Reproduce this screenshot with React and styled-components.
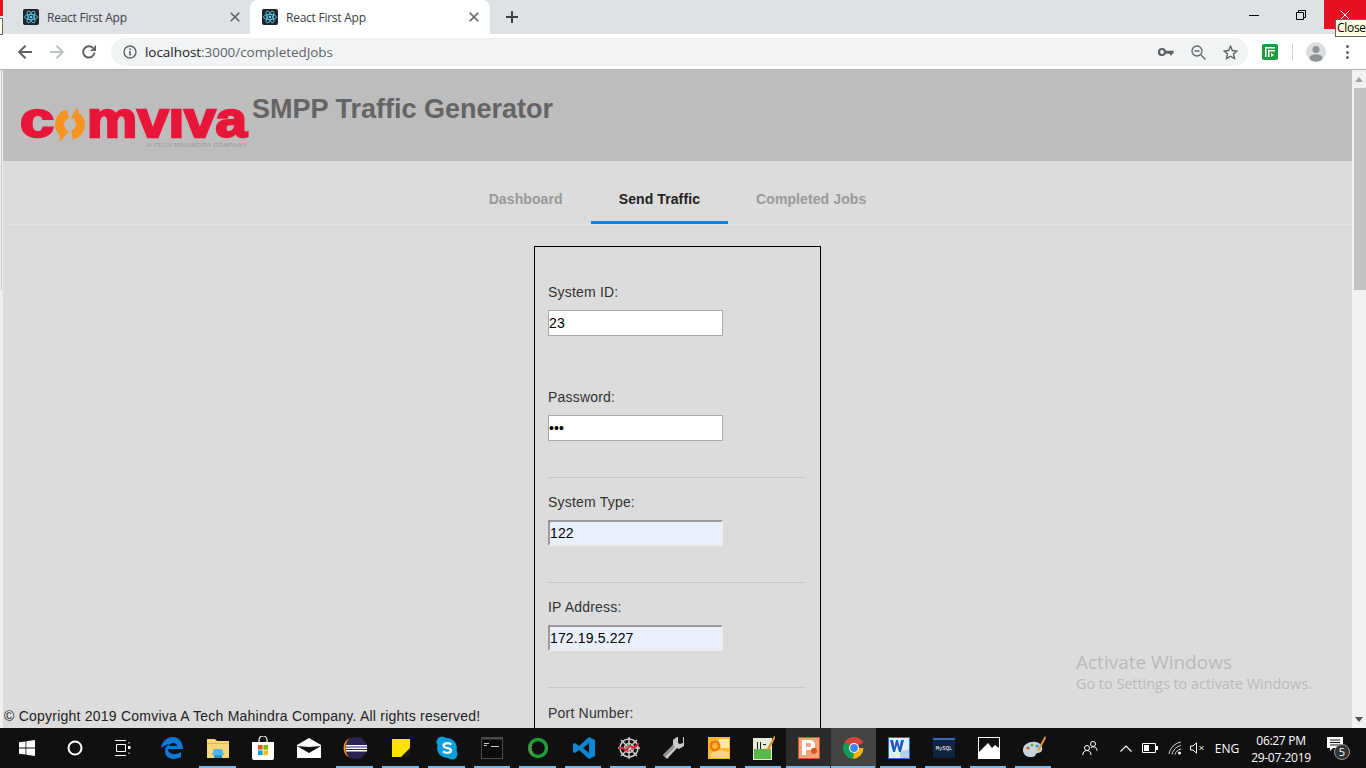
import React from 'react'
import styled, { createGlobalStyle } from 'styled-components'

const GlobalStyle = createGlobalStyle`
  html, body {
    margin: 0;
    padding: 0;
    height: 100%;
    overflow: hidden;
    background: #dcdcdc;
  }
  * { box-sizing: border-box; }
`

const Screen = styled.div`
  position: relative;
  width: 1366px;
  height: 768px;
  overflow: hidden;
  display: flex;
  flex-direction: column;
  font-family: "Liberation Sans", Arial, sans-serif;
`

/* browser chrome */
const TabStrip = styled.div`
  flex: 0 0 34px;
  background: #dee1e6;
  display: flex;
  align-items: flex-end;
  padding-left: 10px;
`

const Tab = styled.div`
  width: 240px;
  height: 34px;
  display: flex;
  align-items: center;
  padding: ${p => (p.$active ? '0 11px 0 12px' : '0 10px 0 13px')};
  gap: 8px;
  border-radius: 8px 8px 0 0;
  background: ${p => (p.$active ? '#fff' : 'transparent')};
  font-family: "Open Sans", sans-serif;
  font-size: 12px;
  color: #3c4043;
`

const TabTitle = styled.span`
  flex: 1;
  letter-spacing: -0.25px;
`

const Favicon = styled.span`
  width: 16px;
  height: 16px;
  border-radius: 2px;
  background: #20232a;
  display: flex;
`

const NewTab = styled.span`
  width: 28px;
  height: 28px;
  margin-left: 8px;
  margin-bottom: 3px;
  display: flex;
  align-items: center;
  justify-content: center;
`

const WindowButtons = styled.div`
  margin-left: auto;
  align-self: flex-start;
  display: flex;
  height: 29px;
`

const WindowButton = styled.span`
  width: ${p => p.$w}px;
  display: flex;
  align-items: center;
  justify-content: center;
  background: ${p => (p.$close ? '#e81123' : 'transparent')};
`

const Toolbar = styled.div`
  flex: 0 0 36px;
  background: #fff;
  display: flex;
  align-items: center;
  padding-left: 9px;
  padding-top: 1px;
  border-bottom: 1px solid #b4b4b4;
`

const NavButton = styled.span`
  width: 32px;
  height: 28px;
  display: flex;
  align-items: center;
  justify-content: center;
`

const AddressBar = styled.div`
  width: 1137px;
  height: 28px;
  margin-left: 6px;
  padding: 0 2px 0 12px;
  border-radius: 14px;
  background: #f1f3f4;
  display: flex;
  align-items: center;
  font-family: "Open Sans", sans-serif;
  font-size: 13.5px;
  letter-spacing: -0.05px;
`

const UrlHost = styled.span`
  margin-left: 8px;
  color: #202124;
`

const UrlPath = styled.span`
  color: #5f6368;
  flex: 1;
`

const AddressIcon = styled.span`
  width: 32px;
  display: flex;
  justify-content: center;
`

const ToolbarDivider = styled.span`
  width: 1px;
  height: 16px;
  background: #d0d1d2;
  margin: 0 13px 0 14px;
`

const ExtensionIcon = styled.span`
  width: 16px;
  height: 16px;
  margin-left: 14px;
  border-radius: 2px;
  background: #1f9a3e;
  display: flex;
`

const Avatar = styled.span`
  width: 20px;
  height: 20px;
  border-radius: 50%;
  background: #dadce0;
  overflow: hidden;
  display: flex;
`

const MenuDots = styled.span`
  display: flex;
  flex-direction: column;
  gap: 2.4px;
  margin-left: 20px;
  & i {
    width: 3px;
    height: 3px;
    border-radius: 50%;
    background: #5f6368;
  }
`

/* page */
const Viewport = styled.div`
  flex: 1;
  min-height: 0;
  display: flex;
  background: #dcdcdc;
`

const LeftEdge = styled.div`
  flex: 0 0 3px;
  background: #f0f0f0;
  padding-left: 1px;
`

const LeftEdgeThumb = styled.span`
  display: block;
  width: 1px;
  height: 220px;
  background: #c8c8c8;
`

const Page = styled.div`
  flex: 1;
  min-width: 0;
  overflow: hidden;
`

const Header = styled.header`
  height: 91px;
  background: #bdbdbd;
  display: flex;
  align-items: flex-start;
  padding-left: 17px;
`

const Logo = styled.svg`
  width: 232px;
  height: 70px;
  margin-top: 17px;
  flex-shrink: 0;
`

const Title = styled.h1`
  margin: 22px 0 0;
  font-size: 27px;
  line-height: 34px;
  font-weight: 700;
  color: #646464;
`

const TabBar = styled.nav`
  height: 64px;
  padding-top: 14px;
  border-bottom: 1px solid #e2e2e2;
  display: flex;
  justify-content: center;
`

const NavTab = styled.div`
  height: 49px;
  padding: 1px 28px 0;
  display: flex;
  align-items: center;
  font-size: 14px;
  font-weight: 700;
  letter-spacing: 0.1px;
  color: ${p => (p.$active ? '#222' : '#999')};
  border-bottom: 3px solid ${p => (p.$active ? '#0a84d8' : 'transparent')};
`

const CardWrap = styled.div`
  display: flex;
  justify-content: center;
  padding-top: 21px;
`

const Card = styled.form`
  width: 287px;
  height: 700px;
  border: 1px solid #000;
  padding: 0 14px 0 13px;
`

const Field = styled.div`
  height: 105px;
  padding-top: ${p => (p.$first ? '36px' : '15px')};
  border-top: 1px solid ${p => (p.$rule ? '#c8c8c8' : 'transparent')};
  &:first-child {
    height: 125px;
    border-top: 0;
  }
  &:last-child {
    padding-top: 16px;
  }
`

const Label = styled.label`
  display: block;
  font-size: 14px;
  line-height: 18px;
  letter-spacing: 0.2px;
  color: #333;
  margin-bottom: 9px;
`

const Input = styled.input`
  display: block;
  width: 175px;
  height: 26px;
  padding: 1px 0;
  font-family: "Liberation Sans", Arial, sans-serif;
  font-size: 14px;
  letter-spacing: 0.15px;
  color: #000;
  background: ${p => (p.$autofill ? '#e8f0fe' : '#fff')};
  border-style: solid;
  border-width: ${p => (p.$autofill ? '2px' : '1px')};
  border-color: ${p => (p.$autofill ? '#9a9a9a #eeeeee #eeeeee #9a9a9a' : '#a9a9a9')};
  border-radius: 0;
  outline: none;
`

const Scrollbar = styled.div`
  flex: 0 0 14px;
  background: #f1f1f1;
  display: flex;
  flex-direction: column;
  align-items: flex-end;
`

const ScrollButton = styled.span`
  width: 14px;
  height: 18px;
  display: flex;
  align-items: center;
  justify-content: center;
`

const ScrollThumb = styled.span`
  width: 12px;
  height: 202px;
  background: #c1c1c1;
`

const ScrollTrack = styled.span`
  flex: 1;
`

/* things lying over the page */
const Copyright = styled.div`
  position: absolute;
  left: 4px;
  bottom: 44px;
  font-size: 14px;
  line-height: 16px;
  letter-spacing: 0.23px;
  color: #222;
`

const Watermark = styled.div`
  position: absolute;
  left: 1076px;
  top: 650px;
  font-family: "Open Sans", sans-serif;
  color: #b9b9b9;
`

const WatermarkTitle = styled.div`
  font-size: 19px;
  line-height: 24px;
`

const WatermarkText = styled.div`
  font-size: 14.4px;
  line-height: 20px;
`

const Tooltip = styled.div`
  position: absolute;
  left: 1335px;
  top: 19px;
  width: 31px;
  height: 18px;
  padding-left: 1px;
  background: #ffffe1;
  border: 1px solid #646464;
  border-right: 0;
  font-family: "Open Sans", sans-serif;
  font-size: 12px;
  line-height: 15px;
  letter-spacing: -0.3px;
  white-space: nowrap;
  color: #000;
`

const CornerMark = styled.div`
  position: absolute;
  left: 0;
  top: 0;
  width: 3px;
  height: 16px;
  background: #e81123;
`

const CornerTip = styled.div`
  position: absolute;
  left: 0;
  top: 18px;
  width: 3px;
  height: 17px;
  background: #ffffe1;
  border: 1px solid #646464;
  border-left: 0;
`

/* taskbar */
const Taskbar = styled.div`
  flex: 0 0 40px;
  background: #101010;
  display: flex;
  color: #fff;
  font-family: "Open Sans", sans-serif;
`

const ShellSlot = styled.span`
  flex: 0 0 ${p => p.$w}px;
  display: flex;
  align-items: center;
  justify-content: center;
`

const AppSlot = styled.span`
  position: relative;
  flex: 0 0 ${p => (p.$wide ? '45.8px' : '45px')};
  height: 40px;
  display: flex;
  align-items: center;
  justify-content: center;
  background: ${p => (p.$state === 'active' ? '#444' : p.$state === 'open' ? '#2b2b2b' : 'transparent')};
  &::after {
    content: '';
    display: ${p => (p.$running ? 'block' : 'none')};
    position: absolute;
    left: ${p => (p.$state ? '0' : '4px')};
    right: ${p => (p.$state ? '1px' : '5px')};
    bottom: 0;
    height: 2px;
    background: #76b9ed;
  }
`

const Tray = styled.div`
  margin-left: auto;
  display: flex;
  align-items: center;
  padding-right: 5px;
  font-size: 12px;
`

const TraySlot = styled.span`
  width: ${p => p.$w}px;
  margin-left: ${p => p.$gap || 0}px;
  display: flex;
  align-items: center;
  justify-content: center;
`

const Clock = styled.span`
  width: 68px;
  text-align: center;
  font-size: 12px;
  line-height: 17px;
  letter-spacing: -0.3px;
  padding-top: 1px;
`

const BackArrow = ({ color = '#5f6368', flip }) => (
  <svg width="16" height="16" viewBox="0 0 16 16" style={flip ? { transform: 'scaleX(-1)' } : undefined}>
    <path d="M15 8H2.5M8.5 1.8 2.2 8l6.3 6.2" fill="none" stroke={color} strokeWidth="2" />
  </svg>
)

const ReactMark = () => (
  <svg width="16" height="16" viewBox="0 0 16 16" fill="none" stroke="#61dafb" strokeWidth="0.8">
    <circle cx="8" cy="8" r="1.3" fill="#61dafb" stroke="none" />
    <ellipse cx="8" cy="8" rx="6.5" ry="2.6" />
    <ellipse cx="8" cy="8" rx="6.5" ry="2.6" transform="rotate(60 8 8)" />
    <ellipse cx="8" cy="8" rx="6.5" ry="2.6" transform="rotate(120 8 8)" />
  </svg>
)

const CloseGlyph = ({ color = '#5f6368', size = 10, width = 1.6 }) => (
  <svg width={size} height={size} viewBox="0 0 10 10">
    <path d="M.7.7l8.6 8.6M9.3.7.7 9.3" stroke={color} strokeWidth={width} fill="none" />
  </svg>
)

const ComvivaLogo = () => (
  <Logo viewBox="0 0 232 70">
    <text x="0" y="50" fontFamily="'Liberation Sans', sans-serif" fontWeight="700" fontSize="50" fill="#e8173a" stroke="#e8173a" strokeWidth="2.4" textLength="34" lengthAdjust="spacingAndGlyphs">c</text>
    <g fill="none" stroke="#f7941d" strokeWidth="9">
      <path d="M57 30A10.500 10.500 0 0 1 52 48" />
      <path d="M43 45A10.500 10.500 0 0 1 48 27" />
    </g>
    <path d="M57 20l-6 11 10 2zM40 55l9-11-10-2z" fill="#f7941d" />
    <text x="67" y="50" fontFamily="'Liberation Sans', sans-serif" fontWeight="700" fontSize="50" fill="#e8173a" stroke="#e8173a" strokeWidth="2.4" textLength="160" lengthAdjust="spacingAndGlyphs">mvıva</text>
    <text x="127" y="60" fontFamily="'Liberation Sans', sans-serif" fontWeight="700" fontSize="6" fill="#a5a5a5" textLength="100" lengthAdjust="spacingAndGlyphs">A TECH MAHINDRA COMPANY</text>
  </Logo>
)

const ICONS = {
  edge: (
    <svg width="24" height="24" viewBox="0 0 24 24">
      <path d="M1 12C2 5 7 1 13 1c6 0 10 5 10 12H8c.4 5 7 7 13 3v5c-7 4-16 2-16-6 0-3 2-6 5-7-3 0-6 2-9 4zM9 10h8c0-4-7-4-8 0z" fill="#0f78d4" />
    </svg>
  ),
  folder: (
    <svg width="22" height="20" viewBox="0 0 22 20">
      <path d="M0 1h8l2 2h12v17H0z" fill="#f8d575" />
      <path d="M0 5h22v1H0z" fill="#e9b949" />
      <path d="M5 17l2-6h8l2 6z" fill="#4db4e8" />
      <path d="M7 17h8v3H7z" fill="#2a8fcb" />
    </svg>
  ),
  store: (
    <svg width="22" height="24" viewBox="0 0 22 24">
      <path d="M7 6V4a4 4 0 0 1 8 0v2" fill="none" stroke="#fff" strokeWidth="1.2" />
      <path d="M0 6h22v16a2 2 0 0 1-2 2H2a2 2 0 0 1-2-2z" fill="#fff" />
      <path d="M6 9h4.6v4.6H6z" fill="#f25022" />
      <path d="M11.4 9H16v4.6h-4.6z" fill="#7fba00" />
      <path d="M6 14.4h4.6V19H6z" fill="#00a4ef" />
      <path d="M11.4 14.4H16V19h-4.6z" fill="#ffb900" />
    </svg>
  ),
  mail: (
    <svg width="24" height="20" viewBox="0 0 24 20">
      <path d="M12 0l12 7v13H0V7z" fill="#fff" />
      <path d="M0 8l12 7 12-7-12 1z" fill="#101010" />
    </svg>
  ),
  eclipse: (
    <svg width="24" height="24" viewBox="0 0 24 24">
      <circle cx="13" cy="12" r="11" fill="#2c2255" />
      <path d="M7 2A11 11 0 0 0 7 22 13 13 0 0 1 7 2z" fill="#f7941e" />
      <path d="M3 9h21v1.4H3zM2.600 11.500h21.400v1.400H2.600zM3 14h21v1.400H3z" fill="#fff" />
    </svg>
  ),
  sticky: (
    <svg width="18" height="18" viewBox="0 0 18 18">
      <path d="M0 0h18v18H0z" fill="#ffe100" />
      <path d="M9 18l9-9v9z" fill="#1a1a1a" />
    </svg>
  ),
  skype: (
    <svg width="22" height="24" viewBox="0 0 22 24">
      <circle cx="11" cy="12" r="10" fill="#0a9edc" />
      <circle cx="6" cy="6" r="5.500" fill="#0a9edc" />
      <circle cx="16" cy="18" r="5.500" fill="#0a9edc" />
      <path d="M15.500 8.500C13 6.500 7.500 7 7.500 9.500c0 3.500 7.500 1.500 7.500 5 0 2.800-5.500 3-8 .8" fill="none" stroke="#fff" strokeWidth="2.200" />
    </svg>
  ),
  terminal: (
    <svg width="22" height="22" viewBox="0 0 22 22">
      <path d="M0 0h22v22H0z" fill="#4a4a4a" />
      <path d="M1 2.500h20V21H1z" fill="#0c0c0c" />
      <path d="M3 6h5v1H3zM3 8h3v1H3zM10 9h8v1h-8z" fill="#ccc" />
    </svg>
  ),
  ring: (
    <svg width="22" height="24" viewBox="0 0 22 24">
      <circle cx="11" cy="12" r="8.500" fill="none" stroke="#1f9d3a" strokeWidth="3.400" />
      <path d="M4 9a8 8 0 0 0 2 9" fill="none" stroke="#6a8f52" strokeWidth="3" strokeDasharray="2 1" />
    </svg>
  ),
  vscode: (
    <svg width="24" height="24" viewBox="0 0 24 24">
      <path d="M17 1l6 3v16l-6 3L7 14l-4 3-2-1V8l2-1 4 3zM17 7l-6 5 6 5z" fill="#0f87d2" />
    </svg>
  ),
  spider: (
    <svg width="24" height="24" viewBox="0 0 24 24" fill="none">
      <g stroke="#cfcfcf" strokeWidth="1.500">
        <circle cx="12" cy="12" r="9" />
        <circle cx="12" cy="12" r="4.500" />
        <path d="M12 1v22M1 12h22M4 4l16 16M20 4L4 20" />
      </g>
      <path d="M2 13c3-3 4-1 6 1s3-4 5-4 3 3 4 2 3-4 5-4" stroke="#d9262e" strokeWidth="2" />
    </svg>
  ),
  wrench: (
    <svg width="24" height="24" viewBox="0 0 24 24">
      <path d="M22 1v9l-5 3-2-1L5 23l-4-4 10-10V4l4-3h1v6l2 1 3-1V1z" fill="#c9c9c9" />
      <path d="M1 19l10-10 2 2L3 21z" fill="#8f8f8f" />
    </svg>
  ),
  outlook: (
    <svg width="22" height="22" viewBox="0 0 22 22">
      <path d="M0 0h22v22H0z" fill="#f7b731" />
      <path d="M11 2h10v9H11z" fill="#fde9a6" />
      <circle cx="7" cy="9" r="4.200" fill="none" stroke="#e87d0d" strokeWidth="2.600" />
      <path d="M3 16l8-3 10 2v6H3z" fill="#fbd77a" />
    </svg>
  ),
  notepad: (
    <svg width="22" height="24" viewBox="0 0 22 24">
      <path d="M0 2h19v22H0z" fill="#e8ead5" />
      <path d="M1 13h17v10H1z" fill="#58b947" />
      <path d="M4 6h1v7H4zM7 6h1v7H7zM10 8h3v1h-3z" fill="#222" />
      <path d="M21 0l-7 13-1 2 3-1 7-13z" fill="#d7902c" />
    </svg>
  ),
  ppt: (
    <svg width="22" height="22" viewBox="0 0 22 22">
      <path d="M0 0h22v22H0z" fill="#d9541e" />
      <path d="M1 1h20v20H1z" fill="#f7a27c" />
      <path d="M4 3h8a4.500 4.500 0 0 1 0 10H8v5H4zM8 6v4h3a2 2 0 0 0 0-4z" fill="#fff" />
      <circle cx="16" cy="14" r="3" fill="#d9541e" />
    </svg>
  ),
  chrome: (
    <svg width="22" height="22" viewBox="0 0 22 22">
      <path d="M11 11L1.500 5.500A11 11 0 0 1 20.500 5.500z" fill="#db4437" />
      <path d="M11 11h9.500A11 11 0 0 1 10 22z" fill="#f4b400" />
      <path d="M11 11l-1 11A11 11 0 0 1 1.500 5.500z" fill="#0f9d58" />
      <circle cx="11" cy="11" r="5" fill="#fff" />
      <circle cx="11" cy="11" r="3.900" fill="#4285f4" />
    </svg>
  ),
  word: (
    <svg width="22" height="22" viewBox="0 0 22 22">
      <path d="M0 0h22v22H0z" fill="#2b6fc8" />
      <path d="M1 1h20v20H1z" fill="#e7eefa" />
      <path d="M2 3l3 12h2l2-7 2 7h2l3-12h-3l-1.500 7L10 3H8l-1.500 7L5 3z" fill="#1d5fb8" />
      <path d="M12 15l9-3v9h-9z" fill="#b8cdea" />
    </svg>
  ),
  mysql: (
    <svg width="22" height="20" viewBox="0 0 22 20">
      <path d="M0 0h22v20H0z" fill="#10233f" />
      <path d="M0 0h22v2H0z" fill="#2f6fb5" />
      <text x="11" y="12" fontSize="5.500" fontFamily="'Liberation Mono', monospace" textAnchor="middle" fill="#fff">MySQL</text>
    </svg>
  ),
  photos: (
    <svg width="22" height="22" viewBox="0 0 22 22">
      <path d="M0 0h22v22H0z" fill="#fff" />
      <path d="M1 1h20v10l-4-3-3 3-4-5-9 9z" fill="#101010" />
    </svg>
  ),
  paint: (
    <svg width="24" height="24" viewBox="0 0 24 24">
      <path d="M1 14c0-6 7-9 13-8 5 1 7 5 6 8-1 4-5 2-6 4-1 3-3 3-6 3-4 0-7-3-7-7z" fill="#c7d4dc" />
      <circle cx="6" cy="12" r="1.500" fill="#e04f3c" />
      <circle cx="10" cy="9" r="1.500" fill="#58b947" />
      <circle cx="15" cy="10" r="1.500" fill="#3b8fd8" />
      <path d="M23 0l-8 14 2 1 7-13z" fill="#e09a35" />
    </svg>
  ),
}

const APPS = [
  { id: 'edge', wide: true },
  { id: 'folder', wide: true, running: true },
  { id: 'store', wide: true },
  { id: 'mail', wide: true },
  { id: 'eclipse', wide: true, running: true },
  { id: 'sticky', wide: true, running: true },
  { id: 'skype', wide: true, running: true },
  { id: 'terminal', wide: true, running: true },
  { id: 'ring', wide: true, running: true },
  { id: 'vscode', running: true },
  { id: 'spider', running: true },
  { id: 'wrench', running: true },
  { id: 'outlook', running: true },
  { id: 'notepad', running: true },
  { id: 'ppt', running: true, state: 'open' },
  { id: 'chrome', running: true, state: 'active' },
  { id: 'word', running: true },
  { id: 'mysql', running: true },
  { id: 'photos', running: true },
  { id: 'paint', running: true },
]

const FIELDS = [
  { label: 'System ID:', value: '23' },
  { label: 'Password:', value: 'abc', type: 'password' },
  { label: 'System Type:', value: '122', autofill: true, rule: true },
  { label: 'IP Address:', value: '172.19.5.227', autofill: true, rule: true },
  { label: 'Port Number:', value: '', rule: true },
]

const App = () => (
  <Screen>
    <GlobalStyle />
    <TabStrip>
      {[false, true].map(active => (
        <Tab key={String(active)} $active={active}>
          <Favicon><ReactMark /></Favicon>
          <TabTitle>React First App</TabTitle>
          <CloseGlyph />
        </Tab>
      ))}
      <NewTab>
        <svg width="14" height="14" viewBox="0 0 14 14">
          <path d="M7 1v12M1 7h12" stroke="#3c4043" strokeWidth="2" />
        </svg>
      </NewTab>
      <WindowButtons>
        <WindowButton $w={46}>
          <svg width="10" height="10" viewBox="0 0 10 10"><path d="M0 5.500h10" stroke="#000" /></svg>
        </WindowButton>
        <WindowButton $w={47}>
          <svg width="10" height="10" viewBox="0 0 10 10" fill="none" stroke="#000">
            <path d="M.5 2.500h7v7h-7zM2.500 2.500v-2h7v7h-2" />
          </svg>
        </WindowButton>
        <WindowButton $w={42} $close>
          <CloseGlyph color="#fff" width={1} />
        </WindowButton>
      </WindowButtons>
    </TabStrip>

    <Toolbar>
      <NavButton><BackArrow /></NavButton>
      <NavButton><BackArrow color="#bdc1c6" flip /></NavButton>
      <NavButton>
        <svg width="16" height="16" viewBox="0 0 16 16" fill="none">
          <path d="M13.500 8.500A5.700 5.700 0 1 1 11.800 3.800" stroke="#5f6368" strokeWidth="2" />
          <path d="M15 1v6H9z" fill="#5f6368" />
        </svg>
      </NavButton>
      <AddressBar>
        <svg width="14" height="14" viewBox="0 0 14 14" fill="none">
          <circle cx="7" cy="7" r="6" stroke="#5f6368" strokeWidth="1.400" />
          <path d="M7 6v4.500M7 3.500v1.400" stroke="#5f6368" strokeWidth="1.600" />
        </svg>
        <UrlHost>localhost</UrlHost>
        <UrlPath>:3000/completedJobs</UrlPath>
        <AddressIcon>
          <svg width="16" height="10" viewBox="0 0 16 10">
            <circle cx="4" cy="5" r="3" fill="none" stroke="#5f6368" strokeWidth="2.200" />
            <path d="M7 3.800h8.500v3H14v1.500h-2V6.800H7z" fill="#5f6368" />
          </svg>
        </AddressIcon>
        <AddressIcon>
          <svg width="15" height="15" viewBox="0 0 15 15" fill="none" stroke="#5f6368" strokeWidth="1.300">
            <circle cx="6" cy="6" r="5" />
            <path d="M3.500 6h5M10 10l4.500 4.500" />
          </svg>
        </AddressIcon>
        <AddressIcon>
          <svg width="15" height="15" viewBox="0 0 15 15" fill="none" stroke="#5f6368" strokeWidth="1.400">
            <path d="M7.500 1.300l1.900 4.200 4.500.5-3.400 3 1 4.500-4-2.300-4 2.300 1-4.500-3.400-3 4.500-.5z" />
          </svg>
        </AddressIcon>
      </AddressBar>
      <ExtensionIcon>
        <svg width="16" height="16" viewBox="0 0 16 16">
          <path d="M3 3h10v1.500H4.500V13H3zM6 6h7v1.500H7.500V13H6z" fill="#fff" />
          <path d="M9 9l3 2-3 2z" fill="#fff" />
        </svg>
      </ExtensionIcon>
      <ToolbarDivider />
      <Avatar>
        <svg width="20" height="20" viewBox="0 0 20 20" fill="#8f9296">
          <circle cx="10" cy="7.500" r="3.500" />
          <ellipse cx="10" cy="16" rx="6.500" ry="3.800" />
        </svg>
      </Avatar>
      <MenuDots><i /><i /><i /></MenuDots>
    </Toolbar>

    <Viewport>
      <LeftEdge><LeftEdgeThumb /></LeftEdge>
      <Page>
        <Header>
          <ComvivaLogo />
          <Title>SMPP Traffic Generator</Title>
        </Header>
        <TabBar>
          <NavTab>Dashboard</NavTab>
          <NavTab $active>Send Traffic</NavTab>
          <NavTab>Completed Jobs</NavTab>
        </TabBar>
        <CardWrap>
          <Card>
            {FIELDS.map((f, i) => (
              <Field key={f.label} $first={i === 0} $rule={f.rule}>
                <Label>{f.label}</Label>
                <Input
                  readOnly
                  type={f.type || 'text'}
                  value={f.value}
                  $autofill={f.autofill}
                />
              </Field>
            ))}
          </Card>
        </CardWrap>
      </Page>
      <Scrollbar>
        <ScrollButton>
          <svg width="8" height="5" viewBox="0 0 8 5"><path d="M4 0l4 5H0z" fill="#a3a3a3" /></svg>
        </ScrollButton>
        <ScrollThumb />
        <ScrollTrack />
        <ScrollButton>
          <svg width="8" height="5" viewBox="0 0 8 5"><path d="M0 0h8L4 5z" fill="#505050" /></svg>
        </ScrollButton>
      </Scrollbar>
    </Viewport>

    <Taskbar>
      <ShellSlot $w={54}>
        <svg width="16" height="16" viewBox="0 0 16 16" fill="#fff">
          <path d="M0 2.300l6.500-.9v6.200H0zM7.300 1.300L16 0v7.600H7.300zM0 8.400h6.500v6.200L0 13.700zM7.300 8.400H16V16l-8.700-1.300z" />
        </svg>
      </ShellSlot>
      <ShellSlot $w={42}>
        <svg width="16" height="16" viewBox="0 0 16 16"><circle cx="8" cy="8" r="6.500" fill="none" stroke="#fff" strokeWidth="2" /></svg>
      </ShellSlot>
      <ShellSlot $w={53}>
        <svg width="16" height="16" viewBox="0 0 16 16" fill="none" stroke="#fff">
          <path d="M0 .5h11M0 15.500h11M1.500 4.500h9v7h-9zM14 2v1.500M14 12.500V14" />
          <path d="M13 6h2.500v3H13z" fill="#fff" stroke="none" />
        </svg>
      </ShellSlot>
      {APPS.map(app => (
        <AppSlot key={app.id} $wide={app.wide} $running={app.running} $state={app.state}>
          {ICONS[app.id]}
        </AppSlot>
      ))}
      <Tray>
        <TraySlot $w={36}>
          <svg width="16" height="16" viewBox="0 0 16 16" fill="none" stroke="#fff">
            <circle cx="5" cy="8" r="2.500" />
            <circle cx="11" cy="4" r="2.500" />
            <path d="M.8 15c0-3 2-4.500 4.200-4.500S9 12 9 15M9 8c.5-1 1-1.200 2-1.200 2.500 0 4 1.500 4 4" />
          </svg>
        </TraySlot>
        <TraySlot $w={24} $gap={6}>
          <svg width="12" height="7" viewBox="0 0 12 7"><path d="M.5 6.500L6 1l5.500 5.500" fill="none" stroke="#fff" strokeWidth="1.200" /></svg>
        </TraySlot>
        <TraySlot $w={24}>
          <svg width="16" height="10" viewBox="0 0 16 10">
            <path d="M.5.500h13v9H.5z" fill="none" stroke="#fff" />
            <path d="M2 2h5v6H2zM14 3h2v4h-2z" fill="#fff" />
          </svg>
        </TraySlot>
        <TraySlot $w={25}>
          <svg width="14" height="14" viewBox="0 0 14 14" fill="none" stroke="#ddd">
            <path d="M1 13C2 7 7 2 13 1M4 13.500C5 9 8.500 5.500 13 4.500M7 13.500C7.500 11 10 8.500 13 8" />
            <circle cx="11.500" cy="12" r="1.500" fill="#fff" stroke="none" />
          </svg>
        </TraySlot>
        <TraySlot $w={20}>
          <svg width="15" height="12" viewBox="0 0 15 12" fill="none" stroke="#fff">
            <path d="M.5 4h2.500L6.500.8v10.400L3 8H.5zM9.500 4l4 4M13.500 4l-4 4" />
          </svg>
        </TraySlot>
        <TraySlot $w={40}>ENG</TraySlot>
        <Clock>06:27 PM<br />29-07-2019</Clock>
        <TraySlot $w={46}>
          <svg width="26" height="26" viewBox="0 0 26 26">
            <path d="M2 2h16v11H8l-3 3v-3H2z" fill="#fff" />
            <path d="M5 5h10M5 7.500h10M5 10h10" stroke="#101010" />
            <circle cx="17" cy="17" r="7.500" fill="#333" stroke="#999" />
            <text x="17" y="21" fontSize="11" fontFamily="'Open Sans', sans-serif" textAnchor="middle" fill="#fff">5</text>
          </svg>
        </TraySlot>
      </Tray>
    </Taskbar>

    <CornerMark />
    <CornerTip />
    <Tooltip>Close</Tooltip>
    <Copyright>© Copyright 2019 Comviva A Tech Mahindra Company. All rights reserved!</Copyright>
    <Watermark>
      <WatermarkTitle>Activate Windows</WatermarkTitle>
      <WatermarkText>Go to Settings to activate Windows.</WatermarkText>
    </Watermark>
  </Screen>
)

export default App
